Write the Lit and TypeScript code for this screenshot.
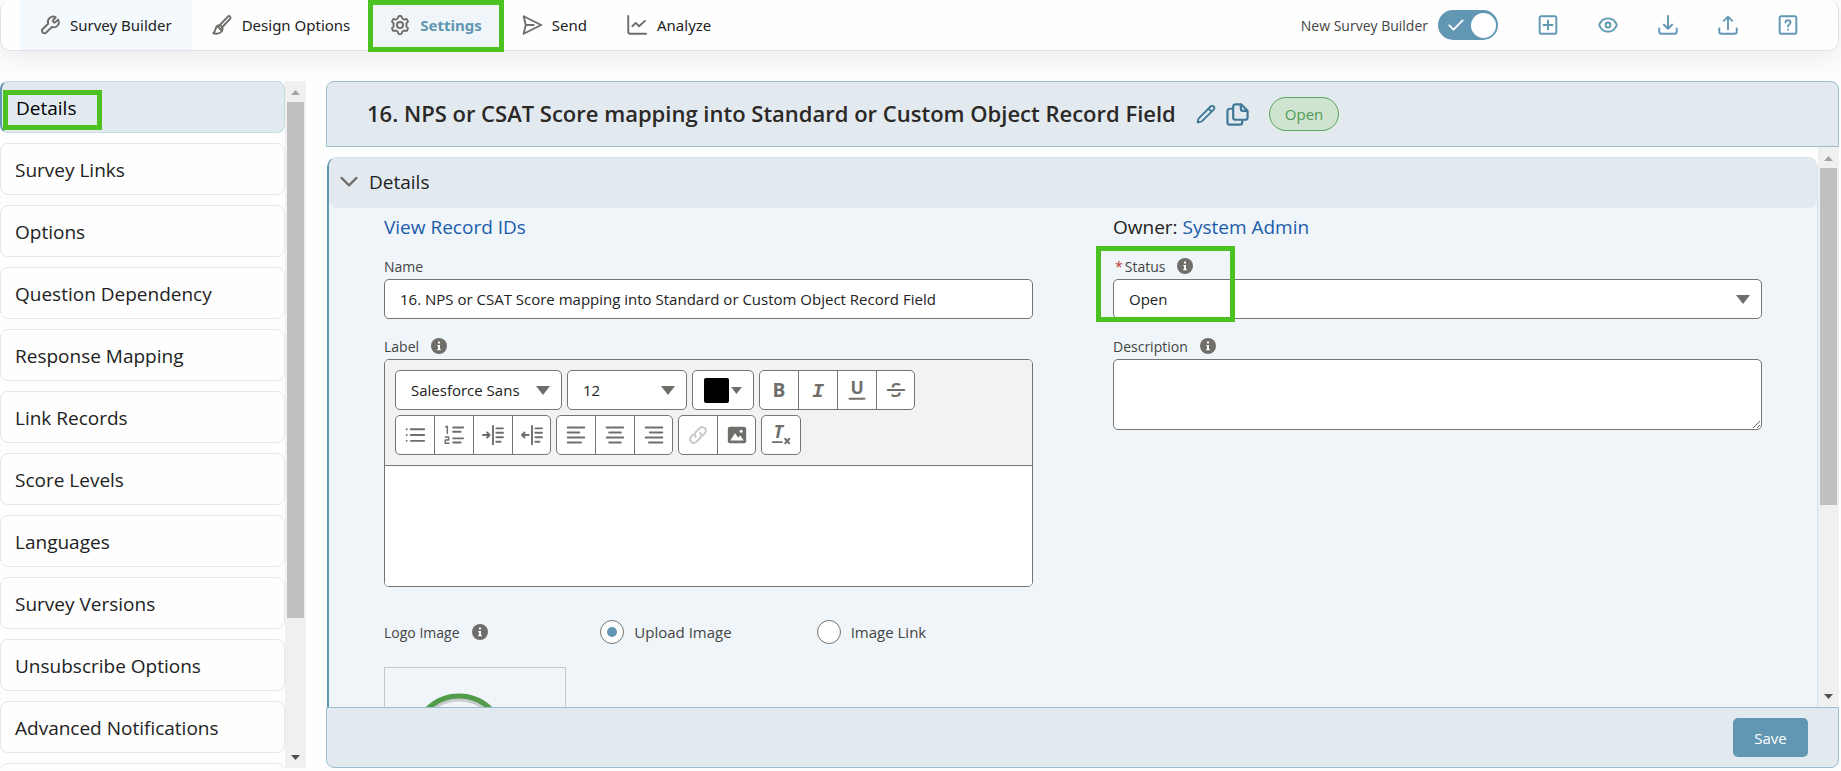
import { LitElement, html, css, svg } from "lit";
import { customElement, state } from "lit/decorators.js";
import { classMap } from "lit/directives/class-map.js";

const icon = (body: unknown, size = 24, cls = "") =>
  html`<svg class="icon ${cls}" width=${size} height=${size} viewBox="0 0 24 24" fill="none" stroke="currentColor"
    stroke-width="2.300" stroke-linecap="round" stroke-linejoin="round" aria-hidden="true">${body}</svg>`;

const glyphs = {
  wrench: svg`<path d="M15.6 6.3c-.4.4-.4 1 0 1.4l1.1 1.1c.4.4 1 .4 1.4 0l3.600-3.300c1.500 2.900.8 5.800-1 7.500-1.800 1.800-4.300 2.200-6.500 1.400L7.500 21c-1.200 1.300-3 1.300-4.200 0s-1.200-3 0-4.200L9.800 10.500C9 8.300 9.500 5.700 11.300 3.900s4.700-2.800 7.600-1.200z"/>`,
  brush: svg`<path d="M9.500 12 19 2c.8-.8 2-.8 2.700-.1s.7 1.900 0 2.700L12 15M9.500 12l3 3M9.500 12c-1.200 0-2.700.5-3.700 1.500-1.800 1.800-.6 4.900-4.300 8.500 3.800.9 7.500.2 9.500-1.700 1.600-1.500 1.900-3.700 1.400-5.200M6.500 13.500l4.500 4.500"/>`,
  gear: svg`<circle cx="12" cy="12" r="3.700"/><path d="M9.200 4.200 9.800 2.300c.2-.8.700-1.200 1.400-1.200h1.600c.7 0 1.200.4 1.400 1.200l.6 1.900 2.100 1.200 2-.5c.7-.2 1.300.1 1.600.7l.8 1.400c.4.600.3 1.200-.2 1.700L19.700 10v4l1.400 1.300c.5.500.6 1.100.2 1.700l-.8 1.400c-.3.600-.9.900-1.600.7l-2-.5-2.100 1.200-.6 1.900c-.2.800-.7 1.200-1.400 1.200h-1.600c-.7 0-1.200-.4-1.400-1.200l-.6-1.900-2.100-1.200-2 .5c-.7.2-1.300-.1-1.600-.7L2.700 17c-.4-.6-.3-1.200.2-1.700L4.300 14v-4L2.900 8.700c-.5-.5-.6-1.100-.2-1.700l.8-1.400c.3-.6.900-.9 1.600-.7l2 .5z"/>`,
  send: svg`<path d="M2 1.500 23 12 2 22.500 4.500 12zM4.500 12H14"/>`,
  chart: svg`<path d="M1.500 1v19c0 1.500.5 2.500 2.500 2.500h19M6.500 13.500l4-4 4 4L21.500 7"/>`,
  plus: svg`<rect x="2" y="1.500" width="20" height="21" rx="1.500"/><path d="M12 6.500v11M6.500 12h11"/>`,
  eye: svg`<path d="M1.500 12C3 7.500 7 4 12 4s9 3.500 10.500 8c-1.500 4.500-5.500 8-10.500 8S3 16.500 1.500 12z"/><circle cx="12" cy="12" r="3"/>`,
  download: svg`<path d="M12 1v15M7 11.500l5 5 5-5M1.500 16v4c0 1.700.8 2.500 2.500 2.500h16c1.700 0 2.500-.8 2.500-2.500v-4"/>`,
  upload: svg`<path d="M12 17V2M7 7l5-5 5 5M1.500 16v4c0 1.700.8 2.500 2.500 2.500h16c1.700 0 2.500-.8 2.500-2.500v-4"/>`,
  help: svg`<rect x="2" y="1.500" width="20" height="21" rx="1.500"/><path d="M9 9c.2-1.800 1.400-2.800 3-2.800s3 1.100 3 2.700c0 2.200-3 2.200-3 4.800M12 17.500v.1"/>`,
  pencil: svg`<path d="M2 22c.2-1.800.3-3.700 1.600-5L17.500 3c1.200-1.200 3-.9 3.800 0 .9.800 1 2.500-.1 3.700L7.300 20.600C6 21.800 3.800 21.800 2 22zM15 5.500 18.700 9.200"/>`,
  copy: svg`<path d="M16 1.500h-6C8.500 1.500 7.500 2.500 7.500 4v11c0 1.500 1 2.500 2.500 2.500h10c1.500 0 2.500-1 2.500-2.500V8zM15.500 1.500v4.500c0 1.500.5 2.300 2 2.300h5M7.500 6H4C2.500 6 1.500 7 1.500 8.500V20c0 1.500 1 2.500 2.500 2.500h10.500c1.500 0 2.500-1 2.500-2.500v-2.500"/>`,
  chevron: svg`<path stroke-width="3" d="m2 6.500 10 10 10-10"/>`,
  tick: svg`<path d="m4 12.500 5 5L20 6.500"/>`,
  bullets: svg`<path d="M2 5h.1M2 12h.1M2 19h.1M7 5h16M7 12h16M7 19h16"/>`,
  numbers: svg`<path d="M11 3h12M11 8h9M11 16h12M11 21h9"/><path stroke-width="1.800" d="m2 2.500 2-1V10M1.500 14.500h4v3.500h-4v4h4.500"/>`,
  indent: svg`<path d="M0 12h8M5 9l3 3-3 3M12 1v22M16 4h8M16 9.300h8M16 14.600h8M16 20h5"/>`,
  outdent: svg`<path d="M0 12h8M3 9l-3 3 3 3M12 1v22M16 4h8M16 9.300h8M16 14.600h8M16 20h5"/>`,
  left: svg`<path d="M2 3h20M2 9h14M2 15h20M2 21h16"/>`,
  center: svg`<path d="M2 3h20M5 9h14M2 15h20M5 21h14"/>`,
  right: svg`<path d="M2 3h20M7 9h15M2 15h20M6 21h16"/>`,
  link: svg`<path d="M9.500 14.500c-2-2-1.800-4.500 0-6.300l4.200-4.200c2-2 4.700-2 6.500-.2s1.800 4.500-.2 6.500L17.800 12.500M14.500 9.500c2 2 1.800 4.500 0 6.300l-4.200 4.200c-2 2-4.700 2-6.500.2s-1.800-4.500.2-6.500l2.200-2.200"/>`,
  picture: svg`<rect x="1" y="2" width="22" height="20" rx="2.500" fill="currentColor" stroke="none"/><path d="m4 18.500 5.500-8.500 4 5 2.500-2.500 4 6z" fill="#fff" stroke="none"/><circle cx="17" cy="7.500" r="1.800" fill="#fff" stroke="none"/>`,
  bold: svg`<text x="12" y="20" text-anchor="middle" font-size="23" font-weight="700" fill="currentColor" stroke="none">B</text>`,
  italic: svg`<text x="12" y="20" text-anchor="middle" font-size="24" font-weight="700" font-style="italic" font-family="Liberation Mono, monospace" fill="currentColor" stroke="none">I</text>`,
  underline: svg`<text x="12" y="17" text-anchor="middle" font-size="21" font-weight="700" fill="currentColor" stroke="none">U</text><path d="M3 22.500h18"/>`,
  strike: svg`<text x="12" y="20.500" text-anchor="middle" font-size="24" font-weight="600" fill="currentColor" stroke="none">S</text><path stroke="#fff" stroke-width="6" stroke-linecap="butt" d="M2 12h20"/><path d="M2 12h20"/>`,
  clear: svg`<text x="9" y="16" text-anchor="middle" font-size="21" font-weight="700" font-style="italic" fill="currentColor" stroke="none">T</text><path d="M2 20.500h11M17 16.500l5 5.500M22 16.500l-5 5.500"/>`,
};

const info = (about: string) => html`<button class="info" type="button" aria-label="Help: ${about}">
  <svg width="16" height="16" viewBox="0 0 16 16" aria-hidden="true"><circle cx="8" cy="8" r="8" fill="#706e6b"/>
  <path d="M7 3.500h2v2H7zM6.300 7H9v4h.8v1.200H6.200V11H7V8.200h-.7z" fill="#fff"/></svg></button>`;

const caret = () => html`<svg class="caret" width="14" height="9" viewBox="0 0 14 9" aria-hidden="true">
  <path d="M0 0h14L7 9z" fill="#706e6b"/></svg>`;

const scrollbar = (share: number) => html`<div class="bar" aria-hidden="true">
  <svg class="end" viewBox="0 0 21 21"><path d="M6 14h9l-4.500-5z" fill="#a3a3a3"/></svg>
  <div class="track"><div class="thumb" style="height:${share}%"></div></div>
  <svg class="end" viewBox="0 0 21 21"><path d="M6 8h9l-4.500 5z" fill="#505050"/></svg></div>`;

@customElement("app-root")
export class AppRoot extends LitElement {
  @state() private tab = "Settings";
  @state() private section = "Details";

  private tabs = [
    { name: "Survey Builder", glyph: glyphs.wrench },
    { name: "Design Options", glyph: glyphs.brush },
    { name: "Settings", glyph: glyphs.gear },
    { name: "Send", glyph: glyphs.send },
    { name: "Analyze", glyph: glyphs.chart },
  ];
  private actions = [
    { name: "Add", glyph: glyphs.plus },
    { name: "Preview", glyph: glyphs.eye },
    { name: "Download", glyph: glyphs.download },
    { name: "Upload", glyph: glyphs.upload },
    { name: "Help", glyph: glyphs.help },
  ];
  private sections = [
    "Details", "Survey Links", "Options", "Question Dependency", "Response Mapping", "Link Records",
    "Score Levels", "Languages", "Survey Versions", "Unsubscribe Options", "Advanced Notifications", "",
  ];

  static styles = css`
    :host { display: flex; flex-direction: column; height: 100vh; box-sizing: border-box; padding: 0 2px 3px 0;
      overflow: hidden; background: #fefefe; color: #222; font-family: "Open Sans", "Noto Sans", sans-serif; font-size: 15px; }
    *, *::before, *::after { box-sizing: border-box; }
    button, input, select, textarea { font: inherit; color: inherit; margin: 0; }
    button { padding: 0; border: 0; background: none; cursor: pointer; }
    a { color: #1b5cab; text-decoration: none; }
    h1, h2, p { margin: 0; }
    .icon { display: block; flex: none; overflow: visible; }

    .top { flex: none; display: flex; height: 51px; padding: 0 40px 0 19px; border: solid #e1e1ec; border-width: 0 1px 1px;
      border-radius: 10px; box-shadow: 0 8px 24px rgba(60, 60, 80, .09); }
    .tabs { display: flex; flex: 1; font-family: "Noto Sans", "Open Sans", sans-serif; }
    .tab { position: relative; display: flex; align-items: center; gap: 10px; padding: 0 20px; }
    .tab .icon { color: #706e6b; }
    .tab.first { background: #f3f9fc; }
    .tab.on { background: #eff5f8; color: #6197b3; font-weight: 700; }
    .mark::after { content: ""; position: absolute; border: 5px solid #4bc220; pointer-events: none; }
    .tab.mark::after { inset: 0 -2px -2px; }
    .tools { display: flex; align-items: center; gap: 40px; color: #6197b3; }
    .switch { display: flex; align-items: center; gap: 10px; color: #444; font-size: 14px; }
    .toggle { display: grid; align-items: center; }
    .toggle > * { grid-area: 1 / 1; }
    .toggle input { appearance: none; display: flex; align-items: center; justify-content: flex-end; width: 60px; height: 30px;
      padding: 2px; border-radius: 15px; background: #6197b3; }
    .toggle input::before { content: ""; width: 25px; height: 25px; border-radius: 50%; background: #fff; }
    .toggle input:not(:checked) { justify-content: flex-start; background: #aaa; }
    .toggle .icon { margin-left: 8px; color: #fff; pointer-events: none; }

    .page { flex: 1; min-height: 0; display: flex; gap: 20px; padding-top: 30px; }
    .side { display: flex; flex: none; width: 306px; }
    .list { flex: 1; min-width: 0; display: flex; flex-direction: column; gap: 10px; overflow: hidden; }
    .entry { flex: none; height: 52px; padding: 2px 14px 0; border: 1px solid #dfe9ef; border-radius: 8px; text-align: left;
      font-size: 19px; }
    .entry.on { position: relative; background: #e2eaf0; border-color: #c6dae4; border-left: 2px solid #6197b3; color: #000; font-weight: 500; }
    .entry.mark::after { left: 1px; top: 8px; width: 99px; height: 40px; }
    .bar { flex: none; display: flex; flex-direction: column; width: 21px; background: #f0f0f0; }
    .end { display: block; width: 21px; height: 21px; }
    .track { flex: 1; padding: 0 2px; }
    .thumb { background: #c0c0c0; }

    .main { flex: 1; min-width: 0; display: flex; flex-direction: column; }
    .head { flex: none; display: flex; align-items: center; height: 66px; padding: 0 40px; background: #e2eaf0;
      border: 1px solid #9bbfd0; border-radius: 8px 8px 0 0; color: #2b2826; }
    .head h1 { padding-bottom: 2px; font-size: 22px; line-height: 30px; font-weight: 600; }
    .head button { color: #407897; margin-left: 10px; }
    .head h1 + button { margin-left: 20px; }
    .pill { height: 34px; margin-left: 20px; padding: 0 15px; border: 1px solid #5ba45f; border-radius: 17px;
      background: #d0e2d0; color: #4d9b51; line-height: 32px; font-weight: 500; }
    .scroll { flex: 1; min-height: 0; display: flex; }
    .view { flex: 1; min-width: 0; overflow: hidden; padding: 10px 0 0 1px; }
    .card { min-height: 900px; border: 1px solid #d3e1e8; border-left: 2px solid #6197b3; border-radius: 10px; background: #eff5f8; }
    .card h2 { font-size: 19px; font-weight: 400; }
    .fold { display: flex; align-items: center; gap: 11px; width: 100%; height: 50px; padding: 0 11px 2px; border-radius: 8px;
      background: #e2eaef; }
    .fold .icon { color: #706e6b; }
    .cols { display: grid; grid-template-columns: 1fr 1fr; gap: 80px; padding: 5px 55px 0; }
    .col { min-width: 0; display: flex; flex-direction: column; gap: 16px; }
    .lead { height: 26px; font-size: 19px; line-height: 28px; }
    .field { position: relative; display: flex; flex-direction: column; }
    .field.mark::after { left: -17px; top: -9px; width: 139px; height: 76px; }
    .cap { display: flex; align-items: center; height: 24px; padding-bottom: 2px; color: #444; font-size: 14px; }
    .req { color: #c23934; padding: 0 2px 0 2px; }
    .info { margin-left: 12px; line-height: 0; }
    .box { width: 100%; height: 40px; padding: 0 15px; border: 1px solid #747474; border-radius: 5px; background: #fff;
      font-size: 15px; outline: 0; }
    textarea.box { display: block; height: 71px; padding: 10px 15px; resize: vertical; }
    .pick { display: grid; align-items: center; justify-items: end; }
    .pick > * { grid-area: 1 / 1; }
    .pick select { appearance: none; }
    .caret { margin-right: 12px; pointer-events: none; }

    .editor { border: 1px solid #747474; border-radius: 5px; background: #fff; overflow: hidden; }
    .bars { display: flex; flex-direction: column; gap: 5px; padding: 10px; background: #f2f2f2; border-bottom: 1px solid #747474; }
    .row { display: flex; gap: 5px; }
    .font { width: 167px; }
    .size { width: 120px; }
    .color { display: flex; align-items: center; justify-content: center; gap: 2px; width: 62px; height: 40px;
      border: 1px solid #747474; border-radius: 5px; background: #fff; }
    .ink { width: 25px; height: 25px; border-radius: 2px; background: #000; }
    .color .caret { margin: 0; width: 11px; height: 7px; }
    .group { display: flex; border: 1px solid #747474; border-radius: 5px; background: #fff; }
    .group button { display: flex; align-items: center; justify-content: center; width: 38px; height: 38px; color: #706e6b; }
    .group button + button { width: 39px; border-left: 1px solid #747474; }
    .group button:last-child { width: 38px; }
    .group button:disabled { color: #c9c7c5; }
    .canvas { display: block; width: 100%; height: 120px; padding: 10px; border: 0; outline: 0; resize: none; background: #fff; }

    .logo { display: grid; grid-template-columns: 1fr 1fr 1fr; align-items: center; height: 24px; margin-top: 17px; color: #444; }
    .logo .cap { padding: 0; }
    .opt { display: flex; align-items: center; gap: 10px; }
    .opt input { appearance: none; display: grid; place-items: center; width: 24px; height: 24px; border: 1px solid #747474;
      border-radius: 50%; background: #fff; }
    .opt input:checked::before { content: ""; width: 10px; height: 10px; border-radius: 50%; background: #6197b3; }
    .thumbnail { width: 182px; height: 182px; margin-top: 7px; border: 1px solid #c4c8ca; }
    .foot { flex: none; display: flex; align-items: center; justify-content: flex-end; height: 61px; padding: 0 30px;
      background: #e2eaf0; border: 1px solid #9bbfd0; border-radius: 0 0 8px 8px; }
    .save { width: 75px; height: 39px; border-radius: 5px; background: #6197b3; color: #fff; }
  `;

  private tool(name: string, body: unknown, disabled = false) {
    return html`<button type="button" aria-label=${name} ?disabled=${disabled}>${icon(body, 20)}</button>`;
  }

  private toolbar() {
    return html`<div class="bars">
      <div class="row">
        <div class="pick font"><select class="box" aria-label="Font"><option>Salesforce Sans</option></select>${caret()}</div>
        <div class="pick size"><select class="box" aria-label="Font size"><option>12</option></select>${caret()}</div>
        <button class="color" type="button" aria-label="Text color"><span class="ink"></span>${caret()}</button>
        <div class="group">
          ${this.tool("Bold", glyphs.bold)}
          ${this.tool("Italic", glyphs.italic)}
          ${this.tool("Underline", glyphs.underline)}
          ${this.tool("Strikethrough", glyphs.strike)}
        </div>
      </div>
      <div class="row">
        <div class="group">
          ${this.tool("Bulleted list", glyphs.bullets)}
          ${this.tool("Numbered list", glyphs.numbers)}
          ${this.tool("Indent", glyphs.indent)}
          ${this.tool("Outdent", glyphs.outdent)}
        </div>
        <div class="group">
          ${this.tool("Align left", glyphs.left)}
          ${this.tool("Align center", glyphs.center)}
          ${this.tool("Align right", glyphs.right)}
        </div>
        <div class="group">
          ${this.tool("Link", glyphs.link, true)}
          ${this.tool("Image", glyphs.picture)}
        </div>
        <div class="group">${this.tool("Remove formatting", glyphs.clear)}</div>
      </div>
    </div>`;
  }

  render() {
    return html`
      <header class="top">
        <nav class="tabs">
          ${this.tabs.map((t, i) => html`<button type="button"
            class=${classMap({ tab: true, first: i === 0, on: t.name === this.tab, mark: t.name === this.tab })}
            @click=${() => (this.tab = t.name)}>${icon(t.glyph, 20)}<span>${t.name}</span></button>`)}
        </nav>
        <div class="tools">
          <div class="switch"><label for="nsb">New Survey Builder</label>
            <div class="toggle"><input id="nsb" type="checkbox" role="switch" checked />${icon(glyphs.tick, 20)}</div></div>
          ${this.actions.map((a) => html`<button type="button" aria-label=${a.name}>${icon(a.glyph, 20)}</button>`)}
        </div>
      </header>
      <div class="page">
        <aside class="side">
          <nav class="list">
            ${this.sections.map((s) => html`<button type="button"
              class=${classMap({ entry: true, on: s === this.section, mark: s === this.section })}
              @click=${() => (this.section = s)}>${s}</button>`)}
          </nav>
          ${scrollbar(80)}
        </aside>
        <main class="main">
          <div class="head">
            <h1>16. NPS or CSAT Score mapping into Standard or Custom Object Record Field</h1>
            <button type="button" aria-label="Rename">${icon(glyphs.pencil, 20)}</button>
            <button type="button" aria-label="Duplicate">${icon(glyphs.copy, 23)}</button>
            <span class="pill">Open</span>
          </div>
          <div class="scroll">
            <div class="view">
              <section class="card">
                <h2><button class="fold" type="button" aria-expanded="true">${icon(glyphs.chevron, 18)}Details</button></h2>
                <div class="cols">
                  <div class="col">
                    <p class="lead"><a href="#ids">View Record IDs</a></p>
                    <div class="field"><label class="cap" for="name">Name</label>
                      <input class="box" id="name" value="16. NPS or CSAT Score mapping into Standard or Custom Object Record Field" /></div>
                    <div class="field"><div class="cap"><label for="label">Label</label>${info("Label")}</div>
                      <div class="editor">${this.toolbar()}<textarea class="canvas" id="label"></textarea></div></div>
                    <div class="logo">
                      <div class="cap">Logo Image${info("Logo Image")}</div>
                      <label class="opt"><input type="radio" name="logo" checked />Upload Image</label>
                      <label class="opt"><input type="radio" name="logo" />Image Link</label>
                    </div>
                    <div class="thumbnail"><svg width="180" height="180" viewBox="0 0 180 180" aria-hidden="true">
                      <circle cx="74" cy="73" r="42" fill="#f1f6f9" stroke="#c8cbcd" stroke-width="5"/>
                      <circle cx="74" cy="73" r="45" fill="none" stroke="#529b4b" stroke-width="5"/></svg></div>
                  </div>
                  <div class="col">
                    <p class="lead">Owner: <a href="#owner">System Admin</a></p>
                    <div class="field mark"><div class="cap"><span class="req">*</span><label for="status">Status</label>${info("Status")}</div>
                      <div class="pick"><select class="box" id="status"><option>Open</option></select>${caret()}</div></div>
                    <div class="field"><div class="cap"><label for="desc">Description</label>${info("Description")}</div>
                      <textarea class="box" id="desc"></textarea></div>
                  </div>
                </div>
              </section>
            </div>
            ${scrollbar(65)}
          </div>
          <footer class="foot"><button class="save" type="button">Save</button></footer>
        </main>
      </div>`;
  }
}
